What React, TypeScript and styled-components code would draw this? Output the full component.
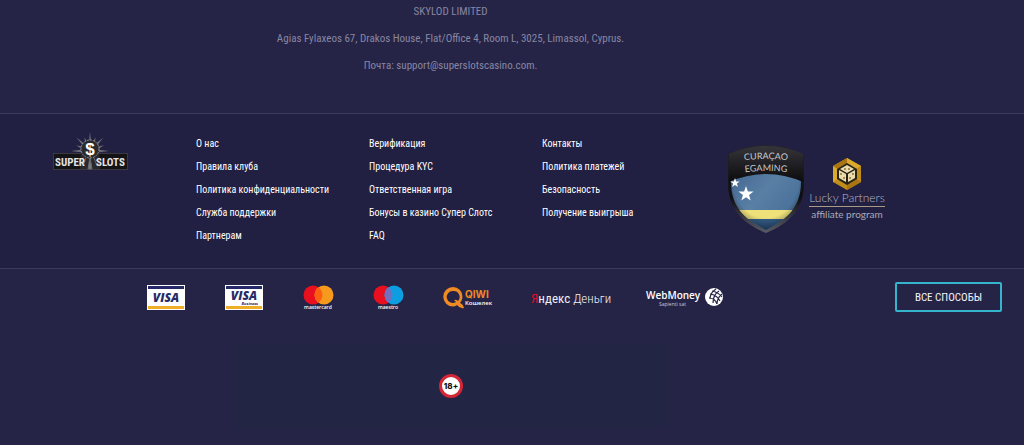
import React from "react";
import styled, { createGlobalStyle } from "styled-components";

const condensed = `"Roboto Condensed", "Liberation Sans Narrow", "Roboto", sans-serif`;

const GlobalStyle = createGlobalStyle`
  * { box-sizing: border-box; }
  body {
    margin: 0;
    background: #252447;
    color: #fff;
    font-family: ${condensed};
    font-size: 11px;
  }
`;

const Company = styled.section`
  padding: 0 12% 35px 0;
  text-align: center;
  color: #8886a2;
`;

const CompanyLine = styled.p`
  margin: 0;
  line-height: 24px;
  & + & { margin-top: 3px; }
`;

const Menu = styled.section`
  display: grid;
  grid-template-columns: 196fr 173fr 173fr 185fr 297fr;
  min-height: 156px;
  padding-top: 18px;
  background: #212042;
  border-top: 1px solid #3b3a5b;
  border-bottom: 1px solid #3b3a5b;
`;

const Brand = styled.a`
  justify-self: center;
  height: 40px;
  padding-right: 16px;
`;

const LinkList = styled.ul`
  list-style: none;
  margin: 0;
  padding: 0;
`;

const LinkItem = styled.li`
  font-size: 10px;
  line-height: 23px;
  white-space: nowrap;
`;

const MenuLink = styled.a`
  color: #fff;
  text-decoration: none;
`;

const Partners = styled.div`
  display: flex;
  gap: 4px;
  padding-top: 12px;
`;

const PartnerLink = styled.a`
  display: block;
`;

const Payments = styled.section`
  display: flex;
  align-items: center;
  justify-content: space-between;
  padding: 13px 22px 14px 147px;
`;

const Methods = styled.ul`
  display: flex;
  align-items: center;
  gap: 40px;
  list-style: none;
  margin: 0;
  padding: 0;
`;

const Method = styled.li`
  display: flex;
`;

const AllButton = styled.button`
  height: 30px;
  padding: 0 18px;
  border: 2px solid #35b5cb;
  border-radius: 2px;
  background: transparent;
  color: #f4f4f8;
  font: 11px ${condensed};
  cursor: pointer;
`;

const Legal = styled.section`
  display: flex;
  justify-content: center;
  padding: 18px 12% 16px 0;
`;

const LegalPanel = styled.div`
  display: flex;
  align-items: center;
  justify-content: center;
  width: 48%;
  height: 84px;
  background: #222544;
`;

const Art = styled.svg`
  display: block;
  overflow: visible;
`;

const columns = [
  ["О нас", "Правила клуба", "Политика конфиденциальности", "Служба поддержки", "Партнерам"],
  ["Верификация", "Процедура KYC", "Ответственная игра", "Бонусы в казино Супер Слотс", "FAQ"],
  ["Контакты", "Политика платежей", "Безопасность", "Получение выигрыша"],
];

const rays = Array.from({ length: 16 }, (_, i) => {
  const a = (i * Math.PI) / 8;
  const r = i % 2 ? 15 : 19;
  const p = (t: number, d: number) => `${37 + Math.cos(t) * d},${19 + Math.sin(t) * d}`;
  return `${p(a - 0.13, 9)} ${p(a, r)} ${p(a + 0.13, 9)}`;
});

const BrandLogo = () => (
  <Art width="75" height="39" viewBox="0 0 75 39" role="img" aria-label="Super Slots">
    {rays.map((r) => <polygon key={r} points={r} fill="#6d6d78" />)}
    <rect x="0.5" y="21.5" width="74" height="16" fill="#141416" stroke="#39393f" />
    <path d="M27 37L28 20L37 10L46 20L47 37Z" fill="#29292d" />
    <path d="M37 25L35 37H39ZM33 26L30 34M41 26L44 34M31 28L28 31M43 28L46 31" fill="#7b7b80" stroke="#66666c" strokeWidth="1" />
    <circle cx="37" cy="17" r="9" fill="#2a2a2e" stroke="#8c8c92" strokeDasharray="2 1" />
    <text x="37" y="23" textAnchor="middle" fontFamily="Liberation Sans, sans-serif" fontWeight="700" fontSize="17" fill="#fff">$</text>
    <text x="2" y="34" fontFamily={condensed} fontWeight="700" fontSize="11" fill="#e4e4e6">SUPER</text>
    <text x="43" y="34" fontFamily={condensed} fontWeight="700" fontSize="11" fill="#e4e4e6">SLOTS</text>
  </Art>
);

const star = (cx: number, cy: number, r: number) =>
  Array.from({ length: 10 }, (_, i) => {
    const a = (i * Math.PI) / 5 - Math.PI / 2;
    const d = i % 2 ? r * 0.4 : r;
    return `${cx + Math.cos(a) * d},${cy + Math.sin(a) * d}`;
  }).join(" ");

const CuracaoBadge = () => (
  <Art width="78" height="90" viewBox="0 0 78 90" role="img" aria-label="Curaçao eGaming">
    <defs>
      <clipPath id="shield"><path d="M4 10Q22 9 39 3Q56 9 74 10V38C74 62 61 75 39 86C17 75 4 62 4 38Z" /></clipPath>
      <linearGradient id="blue" x1="0" y1="0" x2="1" y2="1">
        <stop offset="0" stopColor="#365982" /><stop offset="0.5" stopColor="#5a7fa5" /><stop offset="1" stopColor="#3b6590" />
      </linearGradient>
      <linearGradient id="band" x1="0" y1="0" x2="0" y2="1">
        <stop offset="0" stopColor="#35353a" /><stop offset="0.5" stopColor="#202024" /><stop offset="1" stopColor="#0c0c0e" />
      </linearGradient>
      <linearGradient id="rim" x1="0" y1="0" x2="0" y2="1">
        <stop offset="0" stopColor="#25252a" /><stop offset="0.6" stopColor="#0e0e12" /><stop offset="1" stopColor="#5a5b66" />
      </linearGradient>
      <radialGradient id="shade" cx="0.5" cy="0.4" r="0.6">
        <stop offset="0.7" stopColor="#000" stopOpacity="0" /><stop offset="1" stopColor="#000" stopOpacity="0.6" />
      </radialGradient>
    </defs>
    <path d="M1 10Q20 1 39 1Q58 1 77 10V38C77 65 63 79 39 89C15 79 1 65 1 38Z" fill="url(#rim)" />
    <g clipPath="url(#shield)">
      <rect width="78" height="90" fill="url(#blue)" />
      <rect y="66" width="78" height="9" fill="#efe17a" />
      <rect y="75" width="78" height="14" fill="#355f8b" />
      <rect width="78" height="90" fill="url(#shade)" />
    </g>
    <path d="M2 10Q20 2 39 2Q58 2 76 10V38Q39 22 2 38Z" fill="url(#band)" />
    <polygon points={star(8, 39, 5)} fill="#fff" />
    <polygon points={star(19, 50, 8)} fill="#fff" />
    <path id="arc1" d="M12 17Q39 13 66 17" fill="none" />
    <path id="arc2" d="M12 29Q39 25 66 29" fill="none" />
    <g fill="#c8c8cc" fontFamily="Lato, sans-serif" fontSize="9" textAnchor="middle">
      <text><textPath href="#arc1" startOffset="50%">CURAÇAO</textPath></text>
      <text><textPath href="#arc2" startOffset="50%">EGAMING</textPath></text>
    </g>
  </Art>
);

const LuckyPartners = () => (
  <Art width="78" height="90" viewBox="0 0 78 90" role="img" aria-label="Lucky Partners affiliate program">
    <polygon points="38,14 52,22 52,38 38,46 24,38 24,22" fill="#c08c1a" />
    <path d="M38 14L52 22L47 25L38 20ZM24 22L29 25V35L24 38Z" fill="#dba92c" />
    <path d="M52 38L47 35L38 40V46ZM24 22L38 14V20L29 25Z" fill="#a87512" />
    <polygon points="38,19 48,25 48,35 38,41 28,35 28,25" fill="#282217" />
    <path d="M38 21L45 25L38 29L31 25ZM30 26L37 30V38L30 34ZM46 26L39 30V38L46 34Z" fill="#eadcae" />
    <g fill="#8d7436">
      <circle cx="36" cy="25" r="1" /><circle cx="40" cy="25" r="1" />
      <circle cx="32" cy="30" r="1" /><circle cx="35" cy="34" r="1" />
      <circle cx="44" cy="30" r="1" /><circle cx="41" cy="34" r="1" />
    </g>
    <text x="38" y="58" textAnchor="middle" fontFamily="Lato, sans-serif" fontWeight="300" fontSize="12" fill="#b4b4c2">Lucky Partners</text>
    <rect x="0" y="62" width="76" height="1" fill="#a89a83" />
    <text x="38" y="74" textAnchor="middle" fontFamily="Lato, sans-serif" fontSize="10" fill="#a9a9b8">affiliate program</text>
  </Art>
);

const Visa = ({ business }: { business?: boolean }) => (
  <Art width="38" height="25" viewBox="0 0 38 25" role="img" aria-label={business ? "Visa Business" : "Visa"}>
    <rect width="38" height="25" fill="#fff" />
    <rect x="1" y="1" width="36" height="3" fill="#25296a" />
    <rect x="1" y="21" width="36" height="3" fill="#f0ad26" />
    <text x="19" y={business ? 15 : 17} textAnchor="middle" fontFamily="Open Sans, sans-serif" fontStyle="italic" fontWeight="800" fontSize="12" fill="#272b68">VISA</text>
    {business && <text x="33" y="20" textAnchor="end" fontFamily="Open Sans, sans-serif" fontStyle="italic" fontWeight="700" fontSize="4" fill="#272b68">Business</text>}
  </Art>
);

const Circles = ({ right, mix, label }: { right: string; mix: string; label: string }) => (
  <Art width="30" height="25" viewBox="0 0 30 25" role="img" aria-label={label}>
    <circle cx="10" cy="10" r="9.5" fill="#e8101f" />
    <circle cx="21" cy="10" r="9.5" fill={right} />
    <path d="M15.5 2.3A9.5 9.5 0 0 1 15.5 17.7A9.5 9.5 0 0 1 15.5 2.3Z" fill={mix} />
    <text x="15" y="24" textAnchor="middle" fontFamily="Open Sans, sans-serif" fontWeight="600" fontSize="5" fill="#fff">{label}</text>
  </Art>
);

const Qiwi = () => (
  <Art width="48" height="25" viewBox="0 0 48 25" role="img" aria-label="QIWI Кошелек">
    <path fillRule="evenodd" d="M10 2A9.500 9.500 0 0 1 19.500 12Q19.500 15 17 18Q20 19 21 23Q17 24 14 20Q12 21.500 10 21.500A9.500 9.500 0 0 1 10 2ZM10 6A6 6 0 1 0 13 17L11 15Q13 14 15 16A6 6 0 0 0 10 6Z" fill="#f08a24" />
    <text x="22" y="13" fontFamily="Inter, sans-serif" fontWeight="700" fontSize="10" fill="#f08a24">QIWI</text>
    <text x="22" y="20" fontFamily="Open Sans, sans-serif" fontWeight="600" fontSize="6" fill="#fff">Кошелек</text>
  </Art>
);

const Yandex = () => (
  <Art width="75" height="25" viewBox="0 0 75 25" role="img" aria-label="Яндекс Деньги">
    <text x="0" y="18" fontFamily={condensed} fontSize="13" fill="#f0f0f4">
      <tspan fill="#d8102b">Я</tspan>ндекс <tspan fontWeight="300">Деньги</tspan>
    </text>
  </Art>
);

const WebMoney = () => (
  <Art width="77" height="25" viewBox="0 0 77 25" role="img" aria-label="WebMoney Sapienti sat">
    <text x="0" y="14" fontFamily="Open Sans, sans-serif" fontWeight="600" fontSize="10" fill="#fff">WebMoney</text>
    <text x="13" y="21" fontFamily="Open Sans, sans-serif" fontSize="5" fill="#c9c9d8">Sapienti sat</text>
    <circle cx="68" cy="12" r="9" fill="#fff" />
    <g fill="none" stroke="#252447" strokeWidth="1.200">
      <path d="M66 6Q72 7 76 12M64 9Q71 10 74 16M63 13Q69 13 71 19M70 4Q64 8 64 14M73 6Q67 10 67 18M76 9Q71 13 71 19" />
    </g>
  </Art>
);

const AgeSign = () => (
  <Art width="24" height="24" viewBox="0 0 24 24" role="img" aria-label="18+">
    <circle cx="12" cy="12" r="10.500" fill="#fff" stroke="#d32636" strokeWidth="3" />
    <text x="12" y="15" textAnchor="middle" fontFamily="Inter, sans-serif" fontWeight="800" fontSize="8" fill="#111">18+</text>
  </Art>
);

export default function App() {
  return (
    <>
      <GlobalStyle />
      <footer>
        <Company>
          <CompanyLine>SKYLOD LIMITED</CompanyLine>
          <CompanyLine>Agias Fylaxeos 67, Drakos House, Flat/Office 4, Room L, 3025, Limassol, Cyprus.</CompanyLine>
          <CompanyLine>Почта: support@superslotscasino.com.</CompanyLine>
        </Company>
        <Menu>
          <Brand href="#"><BrandLogo /></Brand>
          {columns.map((items) => (
            <LinkList key={items[0]}>
              {items.map((label) => (
                <LinkItem key={label}><MenuLink href="#">{label}</MenuLink></LinkItem>
              ))}
            </LinkList>
          ))}
          <Partners>
            <PartnerLink href="#"><CuracaoBadge /></PartnerLink>
            <PartnerLink href="#"><LuckyPartners /></PartnerLink>
          </Partners>
        </Menu>
        <Payments>
          <Methods>
            <Method><Visa /></Method>
            <Method><Visa business /></Method>
            <Method><Circles right="#f69a1e" mix="#fb5f12" label="mastercard" /></Method>
            <Method><Circles right="#0c9ee0" mix="#7070c0" label="maestro" /></Method>
            <Method><Qiwi /></Method>
            <Method><Yandex /></Method>
            <Method><WebMoney /></Method>
          </Methods>
          <AllButton type="button">ВСЕ СПОСОБЫ</AllButton>
        </Payments>
        <Legal>
          <LegalPanel><AgeSign /></LegalPanel>
        </Legal>
      </footer>
    </>
  );
}
